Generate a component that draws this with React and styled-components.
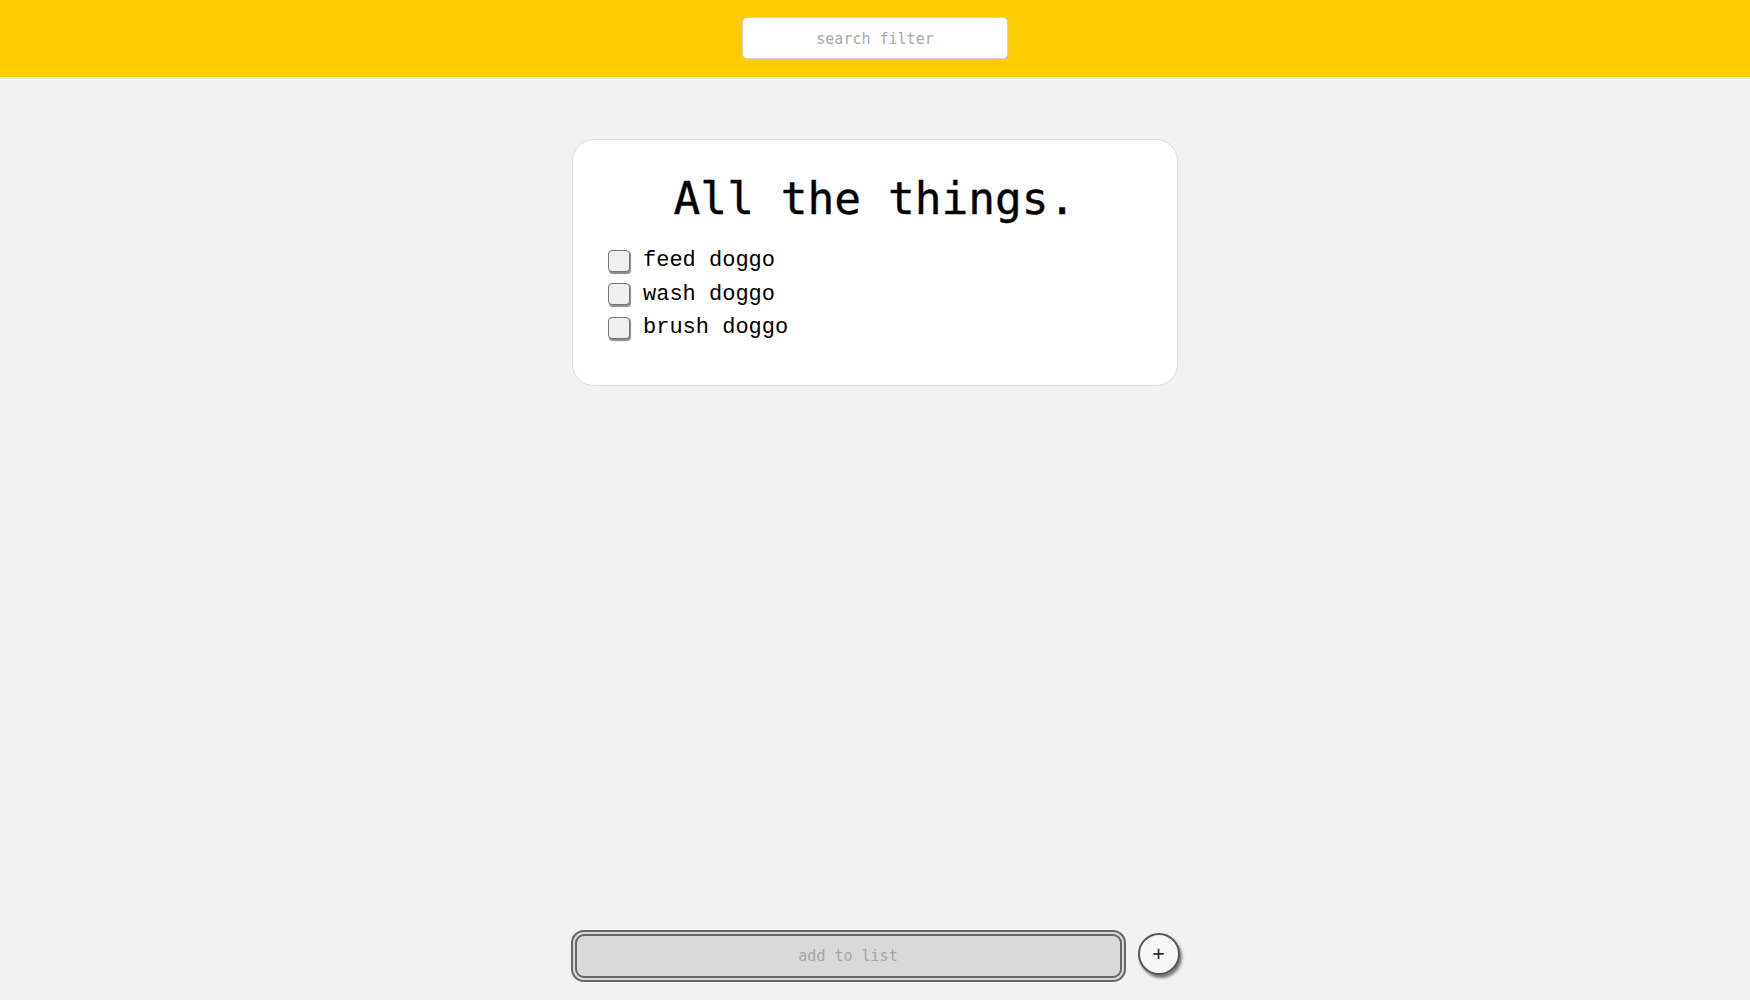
import React from "react";
import styled, { createGlobalStyle } from "styled-components";

const Global = createGlobalStyle`
  html, body { margin: 0; padding: 0; }
  body { background: #f2f2f2; font-family: "DejaVu Sans Mono", monospace; }
  * { box-sizing: border-box; }
`;

const Page = styled.div`
  min-height: 100vh;
  display: flex;
  flex-direction: column;
  align-items: center;
`;

const Header = styled.header`
  align-self: stretch;
  height: 77px;
  background: #ffcc00;
  display: flex;
  justify-content: center;
  padding-top: 17px;
`;

const SearchInput = styled.input`
  width: 266px;
  height: 42px;
  border: 1px solid #cdd3e0;
  border-radius: 5px;
  background: #fff;
  font-family: "DejaVu Sans Mono", monospace;
  font-size: 15px;
  text-align: center;
  color: #333;
  padding-top: 2px;
  outline: none;
  &::placeholder { color: #a9a9a9; }
`;

const Card = styled.section`
  margin-top: 62px;
  width: 606px;
  height: 247px;
  background: #fff;
  border: 1px solid #dcdcdc;
  border-radius: 22px;
  padding: 34px 36px 0 35px;
`;

const Title = styled.h1`
  margin: 0 0 20px;
  text-align: center;
  font-family: "DejaVu Sans Mono", monospace;
  font-weight: normal;
  font-size: 44.5px;
  line-height: 50px;
  color: #000;
  -webkit-text-stroke: 0.4px #000;
`;

const List = styled.ul`
  list-style: none;
  margin: 0;
  padding: 0;
`;

const Item = styled.li`
  height: 33.5px;
  display: flex;
  align-items: center;
  gap: 13px;
  font-family: "Liberation Mono", "Courier New", monospace;
  font-size: 22px;
  color: #000;
`;

const Check = styled.input.attrs({ type: "checkbox" })`
  appearance: none;
  margin: 0;
  width: 22px;
  height: 22px;
  border: 1px solid #767676;
  border-radius: 4px;
  background: #efefef;
  box-shadow: 1px 1.5px 1px #8a8a8a;
`;

const Form = styled.form`
  margin-top: auto;
  margin-bottom: 18px;
  display: flex;
  align-items: center;
  gap: 12px;
`;

const AddInput = styled.input`
  width: 555px;
  height: 52px;
  border: 6px double #666;
  border-radius: 13px;
  background: #d9d9d9;
  font-family: "DejaVu Sans Mono", monospace;
  font-size: 15px;
  text-align: center;
  outline: none;
  &::placeholder { color: #a5a5a5; }
`;

const AddButton = styled.button`
  width: 42px;
  height: 42px;
  margin-bottom: 5px;
  border-radius: 50%;
  border: 2px solid #555;
  background: #f7f7f7;
  box-shadow: 2px 3px 3px #7a7a7a;
  font-family: "DejaVu Sans Mono", monospace;
  font-size: 20px;
  color: #333;
  padding: 0 0 2px;
  display: flex;
  align-items: center;
  justify-content: center;
`;

const items = ["feed doggo", "wash doggo", "brush doggo"];

export default function App() {
  return (
    <>
      <Global />
      <Page>
        <Header>
          <SearchInput placeholder="search filter" />
        </Header>
        <Card>
          <Title>All the things.</Title>
          <List>
            {items.map((t) => (
              <Item key={t}>
                <Check />
                <span>{t}</span>
              </Item>
            ))}
          </List>
        </Card>
        <Form onSubmit={(e) => e.preventDefault()}>
          <AddInput placeholder="add to list" />
          <AddButton type="submit">+</AddButton>
        </Form>
      </Page>
    </>
  );
}
